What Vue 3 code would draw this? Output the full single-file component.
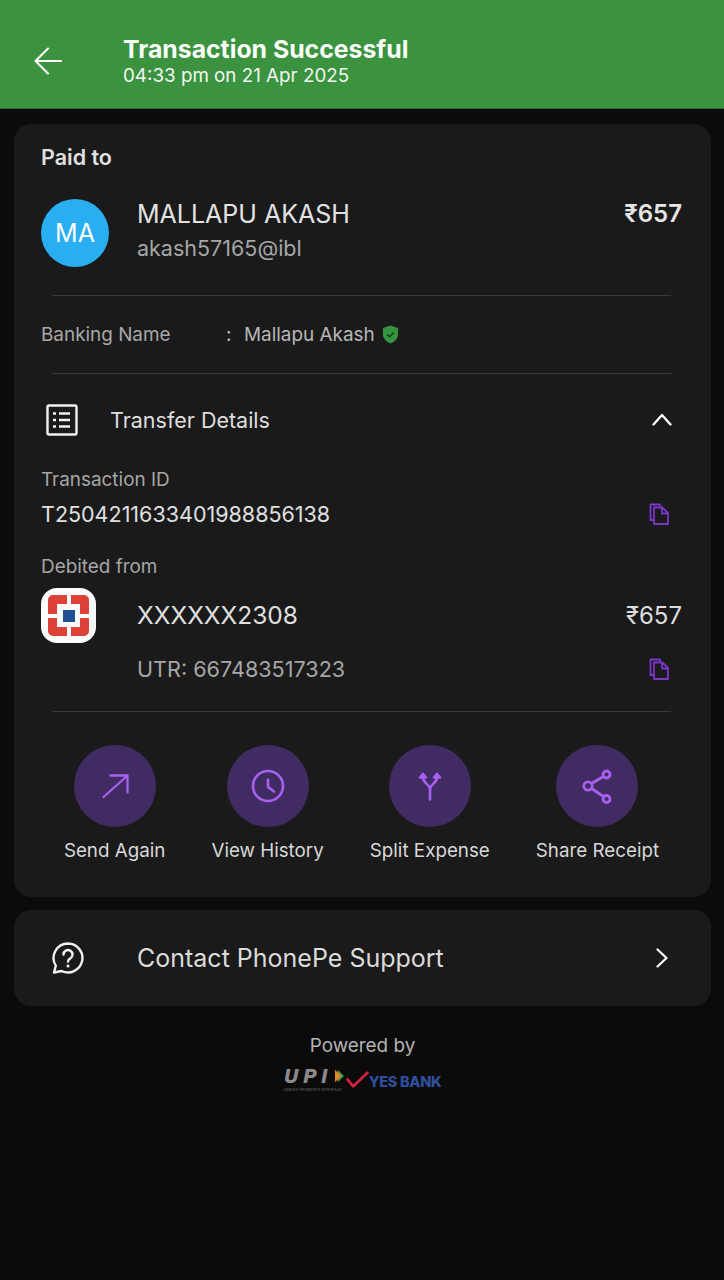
<script setup>
const actions = [
  { label: 'Send Again', icon: 'send' },
  { label: 'View History', icon: 'clock' },
  { label: 'Split Expense', icon: 'split' },
  { label: 'Share Receipt', icon: 'share' },
]
</script>

<template>
  <div class="page">
    <header class="topbar">
      <svg class="back" viewBox="0 0 28 28" fill="none" stroke="#fff" stroke-width="2.100" stroke-linecap="round" stroke-linejoin="round">
        <path d="M1.500 14H27M14 1.500L1.500 14L14 26.500" />
      </svg>
      <div class="top-text">
        <div class="top-title">Transaction Successful</div>
        <div class="top-date">04:33 pm on 21 Apr 2025</div>
      </div>
    </header>

    <main class="content">
      <section class="card main-card">
        <div class="paid-label">Paid to</div>
        <div class="payee">
          <div class="avatar">MA</div>
          <div class="payee-text">
            <div class="payee-name">MALLAPU AKASH</div>
            <div class="payee-id">akash57165@ibl</div>
          </div>
          <div class="payee-amount">₹657</div>
        </div>
        <div class="divider"></div>
        <div class="banking">
          <span class="bank-label">Banking Name</span>
          <span class="bank-colon">:</span>
          <span class="bank-name">Mallapu Akash</span>
          <svg class="shield" viewBox="0 0 18 20">
            <path d="M9 .5L17 3v6.500c0 4.800-3.400 8.300-8 10-4.600-1.700-8-5.200-8-10V3z" fill="#35953f" />
            <path d="M5.500 10l2.500 2.500 4.500-4.500" fill="none" stroke="#123d17" stroke-width="1.500" />
          </svg>
        </div>
        <div class="divider"></div>
        <div class="transfer-head">
          <svg class="receipt" viewBox="0 0 32 32" fill="none" stroke="#f2f2f2" stroke-width="2.400" stroke-linejoin="round">
            <rect x="1.500" y="1.500" width="29" height="29" rx="1.500" />
            <path d="M13 9.500h11M13 16h11M13 22.500h11M7 9.500h3M7 16h3M7 22.500h3" />
          </svg>
          <span class="transfer-title">Transfer Details</span>
          <svg class="chevron-up" viewBox="0 0 20 13" fill="none" stroke="#fff" stroke-width="2.300" stroke-linecap="round" stroke-linejoin="round">
            <path d="M1.500 11.500L10 2l8.500 9.500" />
          </svg>
        </div>
        <div class="detail-label txn-label">Transaction ID</div>
        <div class="txn-row">
          <span class="txn-id">T2504211633401988856138</span>
          <svg class="copy" viewBox="0 0 20 22" fill="none" stroke="#7b35c9" stroke-width="1.800" stroke-linejoin="round">
            <path d="M5 17H1.500V1.500H11V4" />
            <path d="M5 4.500h8.500l5.500 5.500v11H5zM13 4.500V10.500h6" />
          </svg>
        </div>
        <div class="detail-label debit-label">Debited from</div>
        <div class="debit">
          <div class="bank-logo">
            <div class="bank-frame">
              <span class="bank-square"></span>
            </div>
          </div>
          <div class="debit-text">
            <div class="debit-top">
              <span class="account">XXXXXX2308</span>
              <span class="debit-amount">₹657</span>
            </div>
            <div class="utr-row">
              <span class="utr">UTR: 667483517323</span>
              <svg class="copy" viewBox="0 0 20 22" fill="none" stroke="#7b35c9" stroke-width="1.800" stroke-linejoin="round">
                <path d="M5 17H1.500V1.500H11V4" />
                <path d="M5 4.500h8.500l5.500 5.500v11H5zM13 4.500V10.500h6" />
              </svg>
            </div>
          </div>
        </div>
        <div class="divider"></div>
        <div class="actions">
          <div v-for="a in actions" :key="a.label" class="action">
            <div class="action-circle">
              <svg v-if="a.icon === 'send'" class="action-icon" viewBox="0 0 32 32" fill="none" stroke="#a95ff0" stroke-width="2.300" stroke-linecap="round">
                <path d="M4.500 27L27.500 6.500M11.500 5.500h17v17" />
              </svg>
              <svg v-else-if="a.icon === 'clock'" class="action-icon" viewBox="0 0 32 32" fill="none" stroke="#a95ff0" stroke-width="2.600" stroke-linecap="round" stroke-linejoin="round">
                <circle cx="16" cy="16" r="15" />
                <path d="M16 9.500v7.500l6 4.500" />
              </svg>
              <svg v-else-if="a.icon === 'split'" class="action-icon" viewBox="0 0 32 32" fill="none" stroke="#a95ff0" stroke-width="2.600" stroke-linecap="round" stroke-linejoin="round">
                <path d="M16 29.500V19c0-5-7-5-7-12V4M16 19c0-5 7-5 7-12V4" />
                <path d="M6 7.500L9 4l3 3.500zM20 7.500L23 4l3 3.500z" fill="#a95ff0" />
              </svg>
              <svg v-else class="action-icon" viewBox="0 0 32 32" fill="none" stroke="#a95ff0" stroke-width="2.800">
                <circle cx="7" cy="16" r="4.200" />
                <circle cx="25.500" cy="4.500" r="3.500" />
                <circle cx="25.500" cy="29" r="3.500" />
                <path d="M10.500 13.500L22.500 6.500M10.500 18.500L22.500 26.500" />
              </svg>
            </div>
            <div class="action-label">{{ a.label }}</div>
          </div>
        </div>
      </section>

      <section class="card support">
        <svg class="help" viewBox="0 0 32 32" fill="none" stroke="#f0f0f0" stroke-width="2.400" stroke-linecap="round" stroke-linejoin="round">
          <path d="M16 1.500a14.500 14.500 0 1 1-6.500 27.500L2 30.500l1.800-6.800A14.500 14.500 0 0 1 16 1.500z" />
          <path d="M11.500 12.500a4.500 4.500 0 1 1 6.800 3.900c-1.500.9-2.300 1.700-2.300 3.100" />
          <path d="M16 24v.2" stroke-width="2.800" />
        </svg>
        <span class="support-text">Contact PhonePe Support</span>
        <svg class="chevron-right" viewBox="0 0 12 20" fill="none" stroke="#f5f5f5" stroke-width="2.300" stroke-linecap="round" stroke-linejoin="round">
          <path d="M1.500 1.500L10.500 10l-9 8.500" />
        </svg>
      </section>

      <footer class="powered">
        <div class="powered-text">Powered by</div>
        <div class="logos">
          <div class="upi">
            <div class="upi-top">
              <span class="upi-word">UPI</span>
              <svg class="upi-arrow" viewBox="0 0 10 14">
                <path d="M3 0l7 7-7 7z" fill="#3d9a48" />
                <path d="M0 0l7 7-7 7z" fill="#e8842a" />
              </svg>
            </div>
            <div class="upi-sub">UNIFIED PAYMENTS INTERFACE</div>
          </div>
          <svg class="tick" viewBox="0 0 22 16" fill="none" stroke="#d2203f" stroke-width="2.600" stroke-linecap="round" stroke-linejoin="round">
            <path d="M1.500 8l5.500 6.500L20.500 1.500" />
          </svg>
          <span class="yes">YES BANK</span>
        </div>
      </footer>
    </main>
  </div>
</template>

<style>
html, body { margin: 0; background: #0b0b0b; }
</style>

<style scoped>
.page {
  width: 724px;
  height: 1280px;
  background: #0b0b0b;
  font-family: Inter, "Noto Sans", sans-serif;
  overflow: hidden;
}
.topbar {
  height: 109px;
  background: #3b923f;
  display: flex;
  align-items: center;
  padding-left: 34px;
  box-sizing: border-box;
  border-bottom: 1px solid #2e6e32;
}
.back { width: 28px; height: 28px; margin-right: 61px; margin-top: 14px; }
.top-text { display: flex; flex-direction: column; margin-top: 14px; }
.top-title { font-size: 24.800px; font-weight: 700; line-height: 29px; color: #fbfdfb; }
.top-date { font-size: 18.800px; line-height: 23px; color: #f2f7f2; }
.content { padding: 15px 13px 0 14px; display: flex; flex-direction: column; }
.card { background: #1a1a1a; border-radius: 17px; }
.main-card { height: 773px; padding: 0 29px 0 27px; box-sizing: border-box; display: flex; flex-direction: column; }
.paid-label { font-size: 21.500px; font-weight: 600; line-height: 24px; color: #e0e0e0; margin-top: 21px; }
.payee { display: flex; margin-top: 30px; height: 68px; }
.avatar {
  width: 68px; height: 68px; border-radius: 50%;
  background: #29aef2; color: #fff; font-size: 25px;
  display: flex; align-items: center; justify-content: center; flex: none;
}
.payee-text { margin-left: 28px; flex: 1; }
.payee-name { font-size: 25px; line-height: 30px; color: #e2e2e2; }
.payee-id { font-size: 21.500px; line-height: 26px; color: #a6a6a6; margin-top: 6px; }
.payee-amount { font-size: 24px; font-weight: 600; line-height: 30px; color: #e6e6e6; }
.divider { height: 1px; background: #3a3a3a; margin: 0 11px; flex: none; }
.payee + .divider { margin-top: 28px; }
.banking { height: 77px; display: flex; align-items: center; font-size: 18.900px; color: #a8a8a8; }
.bank-label { width: 185px; }
.bank-colon { width: 18px; color: #bbb; }
.bank-name { color: #b8b8b8; }
.shield { width: 17px; height: 19px; margin-left: 7px; }
.transfer-head { height: 93px; padding: 0 0 2px 5px; box-sizing: border-box; display: flex; align-items: center; }
.receipt { width: 32px; height: 32px; flex: none; }
.transfer-title { font-size: 21.500px; color: #dedede; margin-left: 32px; flex: 1; }
.chevron-up { width: 20px; height: 13px; margin-right: 10px; }
.detail-label { font-size: 18.900px; line-height: 24px; color: #a6a6a6; }
.txn-label { margin-top: 1px; }
.txn-row { display: flex; align-items: center; justify-content: space-between; margin-top: 5px; height: 34px; }
.txn-id { font-size: 21.500px; color: #e0e0e0; }
.copy { width: 20px; height: 22px; margin-right: 13px; flex: none; }
.debit-label { margin-top: 24px; }
.debit { display: flex; margin-top: 9px; }
.bank-logo {
  width: 55px; height: 55px; background: #fbfbfb; border-radius: 16px;
  display: flex; align-items: center; justify-content: center; flex: none;
}
.bank-frame {
  position: relative;
  width: 41px; height: 41px; box-sizing: border-box;
  border: 9px solid #dd4238;
  border-radius: 5px;
  background: #fbfbfb;
  display: flex; align-items: center; justify-content: center;
}
.bank-frame::before, .bank-frame::after {
  content: "";
  position: absolute;
  background: #fbfbfb;
}
.bank-frame::before { left: -9px; right: -9px; top: 50%; height: 4px; margin-top: -2px; }
.bank-frame::after { top: -9px; bottom: -9px; left: 50%; width: 4px; margin-left: -2px; }
.bank-square { width: 12px; height: 12px; background: #1d4f91; position: relative; z-index: 1; }
.debit-text { margin-left: 41px; flex: 1; }
.debit-top { display: flex; justify-content: space-between; align-items: center; height: 54px; }
.account { font-size: 24.500px; color: #e0e0e0; }
.debit-amount { font-size: 24px; color: #dddddd; }
.utr-row { display: flex; justify-content: space-between; align-items: center; height: 54px; }
.utr { font-size: 21.600px; color: #a6a6a6; }
.debit + .divider { margin-top: 15px; }
.actions { display: flex; justify-content: center; gap: 46px; margin-top: 33px; }
.action { display: flex; flex-direction: column; align-items: center; }
.action-circle {
  width: 82px; height: 82px; border-radius: 50%;
  background: #412b63;
  display: flex; align-items: center; justify-content: center;
}
.action-icon { width: 32px; height: 32px; overflow: visible; }
.action-label { font-size: 18.800px; line-height: 24px; color: #d8d8d8; margin-top: 12px; white-space: nowrap; }
.support { margin-top: 13px; height: 96px; display: flex; align-items: center; padding-left: 38px; }
.help { width: 32px; height: 32px; flex: none; }
.support-text { font-size: 25px; color: #dcdcdc; margin-left: 53px; flex: 1; }
.chevron-right { width: 12px; height: 20px; margin-right: 43px; }
.powered { display: flex; flex-direction: column; align-items: center; margin-top: 28px; }
.powered-text { font-size: 18.900px; line-height: 24px; color: #b4b4b4; }
.logos { display: flex; align-items: flex-start; margin-top: 10px; height: 26px; }
.upi { width: 60px; }
.upi-top { display: flex; align-items: center; height: 16px; }
.upi-word { font-family: "DejaVu Sans", sans-serif; font-size: 19px; font-weight: 700; font-style: italic; color: #8a8a8a; letter-spacing: 4px; line-height: 16px; width: 51px; white-space: nowrap; }
.upi-arrow { width: 9px; height: 14px; }
.upi-sub { font-size: 3.800px; line-height: 5px; margin-top: 3px; color: #6d6d6d; white-space: nowrap; }
.tick { width: 23px; height: 17px; margin-top: 3px; margin-left: 2px; }
.yes { font-size: 14.500px; font-weight: 800; color: #2f4f9d; line-height: 18px; margin-top: 5px; letter-spacing: -0.300px; white-space: nowrap; }
</style>
